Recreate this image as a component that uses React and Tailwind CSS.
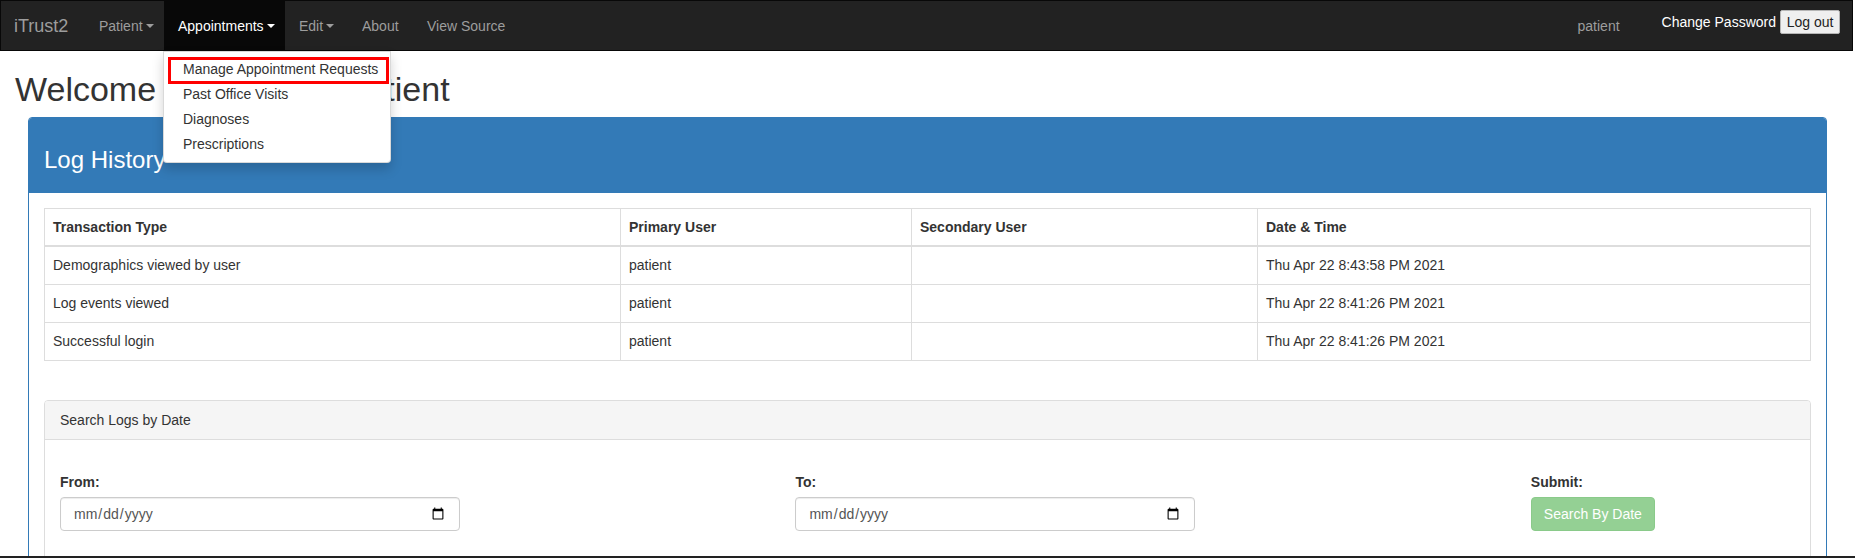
import { useState } from 'react'

const NAV_LINKS = [
  { label: 'Patient', caret: true, width: 'w-[80px] pl-[15px]' },
  { label: 'Appointments', caret: true, active: true, width: 'w-[121px] pl-[14px]' },
  { label: 'Edit', caret: true, width: 'w-[63px] pl-[14px]' },
  { label: 'About', width: 'w-[65px] pl-[14px]' },
  { label: 'View Source', width: 'pl-[14px] pr-[15px]' },
]

const MENU_ITEMS = ['Manage Appointment Requests', 'Past Office Visits', 'Diagnoses', 'Prescriptions']

const LOGS = [
  { type: 'Demographics viewed by user', primary: 'patient', secondary: '', time: 'Thu Apr 22 8:43:58 PM 2021' },
  { type: 'Log events viewed', primary: 'patient', secondary: '', time: 'Thu Apr 22 8:41:26 PM 2021' },
  { type: 'Successful login', primary: 'patient', secondary: '', time: 'Thu Apr 22 8:41:26 PM 2021' },
]

function Caret() {
  return (
    <span className="ml-[3px] inline-block h-0 w-0 border-x-[4px] border-t-[4px] border-x-transparent border-t-current align-middle" />
  )
}

function Navbar() {
  return (
    <nav className="flex h-[51px] items-stretch border border-[#080808] bg-[#222] text-[14px]">
      <a className="flex w-[83px] items-center pl-[13px] text-[18px] text-[#9d9d9d]">iTrust2</a>
      {NAV_LINKS.map(link => (
        <a
          key={link.label}
          className={`flex items-center ${link.width} ${
            link.active ? 'bg-[#080808] text-white' : 'text-[#9d9d9d]'
          }`}
        >
          {link.label}
          {link.caret && <Caret />}
        </a>
      ))}

      <div className="ml-auto flex items-stretch pr-[12px]">
        <span className="mr-[42px] flex items-center text-[#9d9d9d]">patient</span>
        <div className="flex items-center gap-[4px] self-start pt-[9px]">
          <a className="text-white">Change Password</a>
          <button className="h-[24px] w-[60px] rounded-[2px] border border-[#b5b5b5] bg-[#efefef] text-[14px] text-[#222]">
            Log out
          </button>
        </div>
      </div>
    </nav>
  )
}

function DropdownMenu() {
  return (
    <ul className="absolute left-[163px] top-[51px] z-10 w-[228px] rounded-b-[4px] border border-black/15 bg-white py-[5px] shadow-[0_6px_12px_rgba(0,0,0,0.175)]">
      {MENU_ITEMS.map((item, i) => (
        <li key={item} className="relative h-[25px] whitespace-nowrap pl-[19px] leading-[25px] text-[#333]">
          {item}
          {i === 0 && (
            <span className="absolute bottom-[-2px] left-[4px] right-[1px] top-0 border-[3px] border-[#ff0000]" />
          )}
        </li>
      ))}
    </ul>
  )
}

function LogTable() {
  return (
    <table className="w-full table-fixed border-collapse border border-[#ddd]">
      <colgroup>
        <col className="w-[576px]" />
        <col className="w-[291px]" />
        <col className="w-[346px]" />
        <col />
      </colgroup>
      <thead>
        <tr>
          {['Transaction Type', 'Primary User', 'Secondary User', 'Date & Time'].map(h => (
            <th key={h} className="border border-b-2 border-[#ddd] p-[8px] text-left font-bold leading-[20px]">
              {h}
            </th>
          ))}
        </tr>
      </thead>
      <tbody>
        {LOGS.map((log, i) => (
          <tr key={i}>
            <td className="border border-[#ddd] px-[8px] py-[8px] leading-[21px]">{log.type}</td>
            <td className="border border-[#ddd] px-[8px] py-[8px] leading-[21px]">{log.primary}</td>
            <td className="border border-[#ddd] px-[8px] py-[8px] leading-[21px]">{log.secondary}</td>
            <td className="border border-[#ddd] px-[8px] py-[8px] leading-[21px]">{log.time}</td>
          </tr>
        ))}
      </tbody>
    </table>
  )
}

function DateSearch() {
  const [from, setFrom] = useState('')
  const [to, setTo] = useState('')

  const inputClass =
    'h-[34px] w-[400px] rounded-[4px] border border-[#ccc] px-[12px] text-[14px] text-[#555] shadow-[inset_0_1px_1px_rgba(0,0,0,0.075)]'

  return (
    <div className="mt-[39px] rounded-[4px] border border-[#ddd]">
      <div className="rounded-t-[3px] border-b border-[#ddd] bg-[#f5f5f5] px-[15px] py-[9px]">Search Logs by Date</div>
      <div className="px-[15px] pb-[40px] pt-[32px]">
        <div className="-mx-[15px] grid grid-cols-[5fr_5fr_2fr]">
          <div className="px-[15px]">
            <label className="mb-[5px] block font-bold">From:</label>
            <input type="date" value={from} onChange={e => setFrom(e.target.value)} className={inputClass} />
          </div>
          <div className="px-[15px]">
            <label className="mb-[5px] block font-bold">To:</label>
            <input type="date" value={to} onChange={e => setTo(e.target.value)} className={inputClass} />
          </div>
          <div className="px-[15px]">
            <label className="mb-[5px] block font-bold">Submit:</label>
            <button className="h-[34px] rounded-[4px] border border-[#4cae4c] bg-[#5cb85c] px-[12px] text-white opacity-65">
              Search By Date
            </button>
          </div>
        </div>
      </div>
    </div>
  )
}

export default function App() {
  return (
    <div className="relative h-[558px] w-[1855px] overflow-hidden border-b-2 border-[#222] bg-white pr-[2px] font-['Liberation_Sans',Arial,sans-serif] text-[14px] leading-[20px] text-[#333]">
      <Navbar />
      <DropdownMenu />

      <h1 className="mb-[8px] mt-[18px] px-[15px] text-[34px] font-normal leading-[40px]">
        Welcome to iTrust2 – Patient
      </h1>

      {/* Log history panel */}
      <div className="ml-[28px] mr-[26px] rounded-[4px] border border-[#337ab7]">
        <div className="rounded-t-[3px] bg-[#337ab7] px-[15px] py-[10px] text-white">
          <h3 className="mb-[10px] mt-[19px] text-[24px] leading-[26px]">Log History</h3>
        </div>
        <div className="p-[15px]">
          <LogTable />
          <DateSearch />
        </div>
      </div>
    </div>
  )
}
